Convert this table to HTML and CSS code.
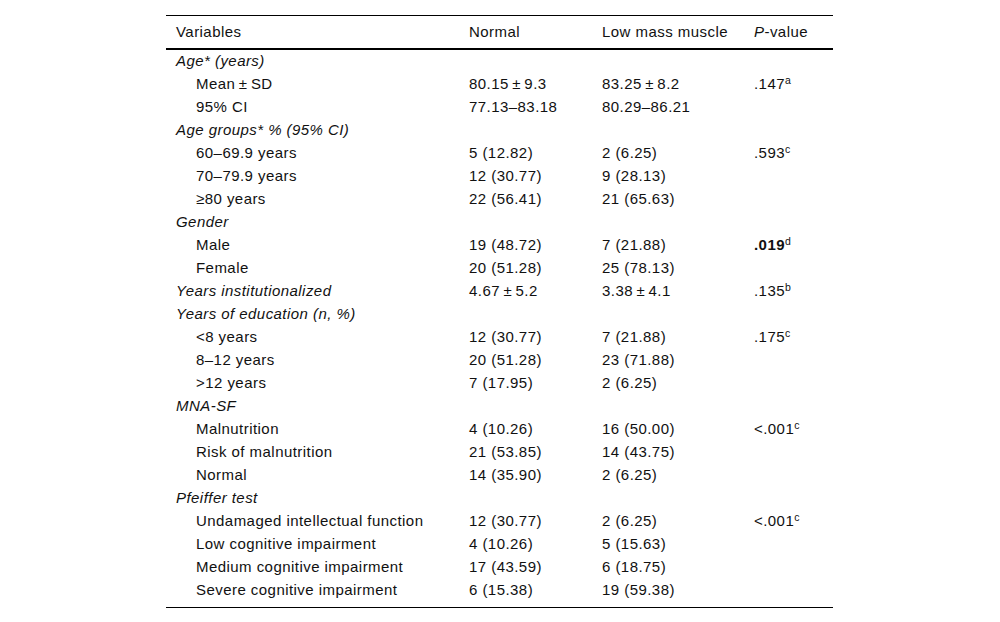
FILE: index.html
```html
<!DOCTYPE html>
<html>
<head>
<meta charset="utf-8">
<link rel="stylesheet" href="styles.css">
</head>
<body>
<table class="data">
  <colgroup>
    <col class="c1"><col class="c2"><col class="c3"><col class="c4">
  </colgroup>
  <thead>
    <tr><th>Variables</th><th>Normal</th><th>Low mass muscle</th><th><i>P</i>-value</th></tr>
  </thead>
  <tbody>
    <tr><td class="grp" colspan="4">Age* (years)</td></tr>
    <tr><td class="sub">Mean&thinsp;±&thinsp;SD</td><td>80.15&thinsp;±&thinsp;9.3</td><td>83.25&thinsp;±&thinsp;8.2</td><td>.147<sup>a</sup></td></tr>
    <tr><td class="sub">95% CI</td><td>77.13–83.18</td><td>80.29–86.21</td><td></td></tr>
    <tr><td class="grp" colspan="4">Age groups* % (95% CI)</td></tr>
    <tr><td class="sub">60–69.9 years</td><td>5 (12.82)</td><td>2 (6.25)</td><td>.593<sup>c</sup></td></tr>
    <tr><td class="sub">70–79.9 years</td><td>12 (30.77)</td><td>9 (28.13)</td><td></td></tr>
    <tr><td class="sub">≥80 years</td><td>22 (56.41)</td><td>21 (65.63)</td><td></td></tr>
    <tr><td class="grp" colspan="4">Gender</td></tr>
    <tr><td class="sub">Male</td><td>19 (48.72)</td><td>7 (21.88)</td><td><b>.019</b><sup>d</sup></td></tr>
    <tr><td class="sub">Female</td><td>20 (51.28)</td><td>25 (78.13)</td><td></td></tr>
    <tr><td class="grp">Years institutionalized</td><td>4.67&thinsp;±&thinsp;5.2</td><td>3.38&thinsp;±&thinsp;4.1</td><td>.135<sup>b</sup></td></tr>
    <tr><td class="grp" colspan="4">Years of education (n, %)</td></tr>
    <tr><td class="sub">&lt;8 years</td><td>12 (30.77)</td><td>7 (21.88)</td><td>.175<sup>c</sup></td></tr>
    <tr><td class="sub">8–12 years</td><td>20 (51.28)</td><td>23 (71.88)</td><td></td></tr>
    <tr><td class="sub">&gt;12 years</td><td>7 (17.95)</td><td>2 (6.25)</td><td></td></tr>
    <tr><td class="grp" colspan="4">MNA-SF</td></tr>
    <tr><td class="sub">Malnutrition</td><td>4 (10.26)</td><td>16 (50.00)</td><td>&lt;.001<sup>c</sup></td></tr>
    <tr><td class="sub">Risk of malnutrition</td><td>21 (53.85)</td><td>14 (43.75)</td><td></td></tr>
    <tr><td class="sub">Normal</td><td>14 (35.90)</td><td>2 (6.25)</td><td></td></tr>
    <tr><td class="grp" colspan="4">Pfeiffer test</td></tr>
    <tr><td class="sub">Undamaged intellectual function</td><td>12 (30.77)</td><td>2 (6.25)</td><td>&lt;.001<sup>c</sup></td></tr>
    <tr><td class="sub">Low cognitive impairment</td><td>4 (10.26)</td><td>5 (15.63)</td><td></td></tr>
    <tr><td class="sub">Medium cognitive impairment</td><td>17 (43.59)</td><td>6 (18.75)</td><td></td></tr>
    <tr class="last"><td class="sub">Severe cognitive impairment</td><td>6 (15.38)</td><td>19 (59.38)</td><td></td></tr>
  </tbody>
</table>
</body>
</html>
```
FILE: styles.css
```css
html, body {
  margin: 0;
  padding: 0;
  background: #fff;
}
body {
  font-family: "Liberation Sans", Arial, sans-serif;
  font-size: 15px;
  letter-spacing: 0.45px;
  color: #111;
}
.data {
  margin: 15px 0 0 166px;
  width: 667px;
  border-collapse: collapse;
  table-layout: fixed;
}
.c1 { width: 293px; }
.c2 { width: 133px; }
.c3 { width: 152px; }
.c4 { width: 89px; }
.data th {
  font-weight: normal;
  text-align: left;
  height: 31px;
  padding: 0 0 1px 10px;
  border-top: 1px solid #000;
  border-bottom: 2px solid #000;
  vertical-align: middle;
}
.data td {
  height: 22px;
  line-height: 22px;
  padding: 0 0 1px 10px;
  white-space: nowrap;
  vertical-align: middle;
}
.data td.grp {
  font-style: italic;
}
.data td.sub {
  padding-left: 30px;
}
.data tr.last td {
  padding-bottom: 6px;
  border-bottom: 1px solid #000;
}
sup {
  font-size: 10.5px;
  line-height: 0;
  vertical-align: 5px;
  letter-spacing: 0;
}
b {
  font-weight: bold;
}
```
